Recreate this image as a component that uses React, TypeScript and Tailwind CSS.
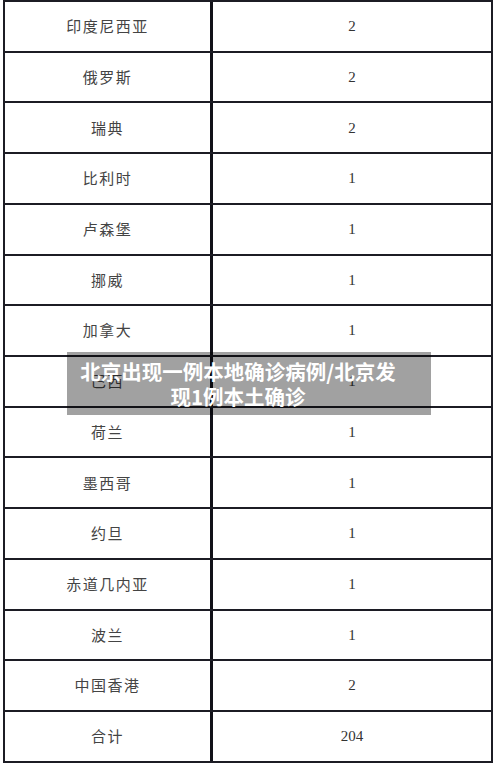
const rows = [
  { name: '印度尼西亚', count: '2' },
  { name: '俄罗斯', count: '2' },
  { name: '瑞典', count: '2' },
  { name: '比利时', count: '1' },
  { name: '卢森堡', count: '1' },
  { name: '挪威', count: '1' },
  { name: '加拿大', count: '1' },
  { name: '巴西', count: '1' },
  { name: '荷兰', count: '1' },
  { name: '墨西哥', count: '1' },
  { name: '约旦', count: '1' },
  { name: '赤道几内亚', count: '1' },
  { name: '波兰', count: '1' },
  { name: '中国香港', count: '2' },
  { name: '合计', count: '204' },
]

export default function App() {
  return (
    <div className="relative w-[500px] h-[768px] bg-white overflow-hidden">
      {/* Table */}
      <div className="ml-[3px] w-[490px] border-t-2 border-l-2 border-r-2 border-[#1c1c24]">
        {rows.map((row) => (
          <div key={row.name} className="grid grid-cols-[208px_1fr] h-[50.73px] border-b-2 border-[#1c1c24]">
            <div
              className="flex items-center justify-center border-r-[3px] border-[#111118] text-[15px] text-[#444] tracking-[1.5px]"
              style={{ fontFamily: '"Noto Sans CJK SC", sans-serif' }}
            >
              {row.name}
            </div>
            <div
              className="flex items-center justify-center text-[15px] text-[#333]"
              style={{ fontFamily: '"Liberation Serif", serif' }}
            >
              {row.count}
            </div>
          </div>
        ))}
      </div>

      {/* Title overlay */}
      <div className="absolute left-[67px] top-[352px] w-[364px] h-[63px] bg-black/[0.37] flex items-center justify-center pr-[22px]">
        <p
          className="text-white font-bold text-[20.5px] leading-[25px] text-center"
          style={{ fontFamily: '"Noto Sans CJK SC", sans-serif' }}
        >
          北京出现一例本地确诊病例/北京发
          <br />
          现1例本土确诊
        </p>
      </div>
    </div>
  )
}
